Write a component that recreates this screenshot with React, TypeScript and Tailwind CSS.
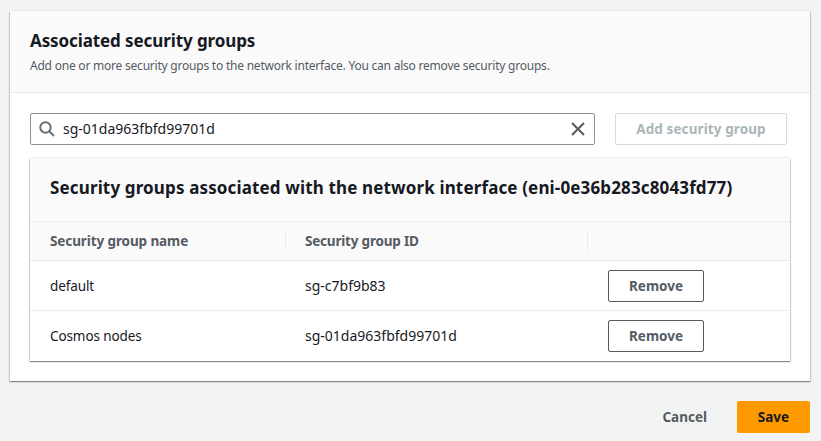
import React from 'react';

const rows = [
  { name: 'default', id: 'sg-c7bf9b83' },
  { name: 'Cosmos nodes', id: 'sg-01da963fbfd99701d' },
];

const App: React.FC = () => {
  return (
    <div className="w-[821px] h-[441px] overflow-hidden bg-[#f2f3f3] pt-[11px] pl-[10px] font-['Noto_Sans',sans-serif] text-[14px] text-[#16191f]">
      {/* Main card */}
      <div className="w-[800px] h-[370px] bg-white shadow-[0_1px_1px_0_rgba(0,28,36,0.3),1px_1px_1px_0_rgba(0,28,36,0.15),-1px_1px_1px_0_rgba(0,28,36,0.15),0_-1px_1px_0_rgba(0,28,36,0.04)]">
        <div className="h-[82px] bg-[#fafafa] border-b border-[#eaeded] px-5 pt-[17px]">
          <h2 className="text-[17px] leading-[26px] font-bold tracking-[-0.1px]">Associated security groups</h2>
          <p className="text-[12px] leading-[18px] mt-[3px] text-[#545b64] tracking-[-0.22px]">
            Add one or more security groups to the network interface. You can also remove security groups.
          </p>
        </div>

        <div className="px-5 pt-5">
          {/* Search */}
          <div className="flex gap-5">
            <div className="w-[565px] h-[32px] flex items-center border border-[#879596] rounded-[2px] pl-[8px] pr-[8px]">
              <svg width="16" height="16" viewBox="0 0 16 16" fill="none" stroke="#687078" strokeWidth="2" className="shrink-0">
                <circle cx="6.5" cy="6.5" r="5.2" />
                <path d="M10.5 10.5l4.5 4.5" />
              </svg>
              <span className="ml-[8px] flex-1 leading-[20px]">sg-01da963fbfd99701d</span>
              <svg width="16" height="16" viewBox="0 0 16 16" fill="none" stroke="#545b64" strokeWidth="2" className="shrink-0">
                <path d="M2 2l12 12M14 2L2 14" />
              </svg>
            </div>
            <button className="w-[172px] h-[32px] border border-[#d5dbdb] rounded-[2px] text-[13.5px] font-bold text-[#aab7b8] bg-white tracking-[0.1px]">
              Add security group
            </button>
          </div>

          {/* Table card */}
          <div className="mt-[13px] w-[760px] h-[203px] bg-white shadow-[0_1px_1px_0_rgba(0,28,36,0.3),1px_1px_1px_0_rgba(0,28,36,0.15),-1px_1px_1px_0_rgba(0,28,36,0.15),0_-1px_1px_0_rgba(0,28,36,0.08)]">
            <div className="h-[64px] bg-[#fafafa] border-b border-[#eaeded] px-5 pb-[3px] flex items-center">
              <h3 className="text-[17px] leading-[22px] font-bold tracking-[0.14px] whitespace-nowrap">
                Security groups associated with the network interface (eni-0e36b283c8043fd77)
              </h3>
            </div>
            <div className="h-[39px] bg-[#fafafa] border-b border-[#eaeded] flex items-center text-[13.5px] font-bold text-[#545b64]">
              <div className="w-[256px] h-[20px] pl-5 border-r border-[#eaeded] leading-[20px] tracking-[-0.1px]">Security group name</div>
              <div className="w-[302px] h-[20px] pl-[19px] border-r border-[#eaeded] leading-[20px] tracking-[-0.2px]">Security group ID</div>
            </div>
            {rows.map((row, i) => (
              <div key={row.id} className={`h-[50px] flex items-center leading-[20px] ${i === 0 ? 'border-b border-[#eaeded] pt-[1px]' : ''}`}>
                <div className="w-[256px] pl-5 text-[13.5px] tracking-[-0.1px]">{row.name}</div>
                <div className="w-[322px] pl-[19px]">{row.id}</div>
                <button className="w-[96px] h-[32px] border border-[#545b64] rounded-[2px] text-[13.5px] font-bold text-[#545b64] bg-white">
                  Remove
                </button>
              </div>
            ))}
          </div>
        </div>
      </div>

      {/* Footer */}
      <div className="w-[800px] mt-5 flex justify-end items-center">
        <button className="text-[13.5px] font-bold text-[#545b64] mr-[30px]">Cancel</button>
        <button className="w-[73px] h-[32px] bg-[#ff9900] rounded-[2px] text-[13.5px] font-bold text-[#16191f]">Save</button>
      </div>
    </div>
  );
};

export default App;
